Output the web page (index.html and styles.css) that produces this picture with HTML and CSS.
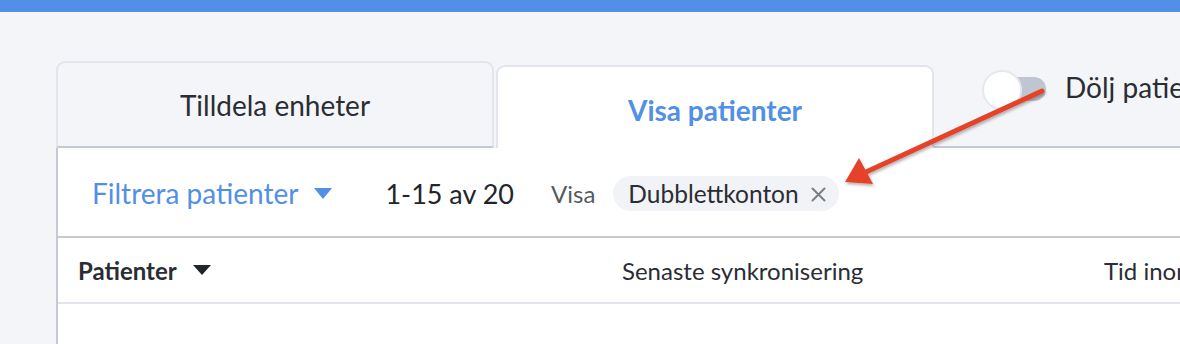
FILE: index.html
```html
<!DOCTYPE html>
<html lang="sv">
<head>
<meta charset="utf-8">
<link rel="stylesheet" href="styles.css">
</head>
<body>
<div class="topbar"></div>
<div class="main">
  <div class="tabs-row">
    <div class="tab tab-inactive">Tilldela enheter</div>
    <div class="tab tab-active">Visa patienter</div>
    <div class="tabs-filler">
      <div class="toggle">
        <span class="track"></span>
        <span class="knob"></span>
      </div>
      <span class="toggle-label">Dölj patienter</span>
    </div>
  </div>
  <div class="panel">
    <div class="filter-row">
      <span class="filter-btn">Filtrera patienter <span class="tri tri-blue"></span></span>
      <span class="count">1-15 av 20</span>
      <span class="visa">Visa</span>
      <span class="chip">Dubblettkonton
        <svg class="chip-x" width="15" height="15" viewBox="0 0 15 15"><path d="M1.5 1.5 L13.5 13.5 M13.5 1.5 L1.5 13.5" stroke="#7a7f87" stroke-width="2" stroke-linecap="round"/></svg>
      </span>
    </div>
    <div class="head-row">
      <div class="col col-patients">Patienter <span class="tri tri-dark"></span></div>
      <div class="col col-sync">Senaste synkronisering</div>
      <div class="col col-time">Tid inom mål</div>
    </div>
    <div class="body-row"></div>
  </div>
</div>
<svg class="arrow" width="1180" height="344" viewBox="0 0 1180 344">
  <defs>
    <filter id="sh" x="-20%" y="-20%" width="140%" height="140%">
      <feDropShadow dx="1" dy="2" stdDeviation="1.5" flood-color="#000" flood-opacity="0.3"/>
    </filter>
  </defs>
  <g filter="url(#sh)">
    <line x1="1042" y1="91" x2="866" y2="172" stroke="#e5432c" stroke-width="5" stroke-linecap="round"/>
    <polygon points="845,182 859,158 873,184" fill="#e5432c"/>
  </g>
</svg>
</body>
</html>
```

FILE: styles.css
```css
* { box-sizing: border-box; }
html, body { margin: 0; padding: 0; }
body {
  width: 1180px;
  height: 344px;
  overflow: hidden;
  background: #f4f5f9;
  font-family: Lato, "Open Sans", sans-serif;
  color: #2a2d33;
  position: relative;
}
.topbar {
  height: 12px;
  background: #538fe7;
}
.main {
  padding: 49px 0 0 56px;
}
.tabs-row {
  display: flex;
  align-items: flex-end;
  height: 87px;
}
.tab {
  width: 438px;
  flex: none;
  display: flex;
  align-items: center;
  justify-content: center;
  font-size: 28px;
  border: 2px solid #e2e5eb;
  border-radius: 9px 9px 0 0;
}
.tab-inactive {
  height: 87px;
  background: #f4f5f9;
  border-bottom: 2px solid #c4c9d3;
  padding-top: 0;
}
.tab-active {
  height: 83px;
  margin-left: 2px;
  background: #fff;
  border-bottom: none;
  color: #528fe6;
  font-weight: 700;
  padding-top: 4px;
}
.tabs-filler {
  flex: 1;
  align-self: stretch;
  border-bottom: 2px solid #c4c9d3;
  display: flex;
  align-items: flex-start;
  padding: 9px 0 0 48px;
  white-space: nowrap;
  overflow: hidden;
}
.toggle {
  position: relative;
  width: 64px;
  height: 40px;
  flex: none;
}
.track {
  position: absolute;
  left: 16px;
  top: 7px;
  width: 48px;
  height: 24px;
  border-radius: 12px;
  background: #c0c6d0;
}
.knob {
  position: absolute;
  left: 0;
  top: 0;
  width: 40px;
  height: 40px;
  border-radius: 50%;
  background: #fff;
  border: 2px solid #e6e8ee;
}
.toggle-label {
  font-size: 28px;
  margin-left: 19px;
  margin-top: 0;
}
.panel {
  background: #fff;
  border-left: 2px solid #c4c9d3;
  height: 200px;
}
.filter-row {
  height: 90px;
  display: flex;
  align-items: center;
  padding-left: 34px;
  border-bottom: 2px solid #c4c9d3;
  padding-top: 2px;
  white-space: nowrap;
}
.filter-btn {
  color: #528fe6;
  font-size: 28px;
  display: flex;
  align-items: center;
}
.tri {
  display: inline-block;
  width: 0;
  height: 0;
  border-left: 9px solid transparent;
  border-right: 9px solid transparent;
}
.tri-blue {
  border-top: 11px solid #528fe6;
  margin-left: 16px;
}
.count {
  font-size: 27px;
  margin-left: 53px;
  color: #22252a;
}
.visa {
  font-size: 24px;
  color: #555a61;
  margin-left: 37px;
}
.chip {
  margin-left: 18px;
  background: #f1f3f7;
  border-radius: 18px;
  height: 35px;
  display: flex;
  align-items: center;
  padding: 0 13px 0 15px;
  font-size: 24.5px;
}
.chip-x {
  margin-left: 12px;
  margin-top: 2px;
  flex: none;
}
.head-row {
  height: 66px;
  display: flex;
  align-items: center;
  border-bottom: 2px solid #e1e4ea;
  font-size: 24px;
  white-space: nowrap;
  overflow: hidden;
}
.col { flex: none; }
.col-patients {
  width: 564px;
  padding-left: 20px;
  font-weight: 700;
  display: flex;
  align-items: center;
}
.tri-dark {
  border-top: 10px solid #22252a;
  margin-left: 16px;
}
.col-sync {
  width: 482px;
}
.arrow {
  position: absolute;
  left: 0;
  top: 0;
  pointer-events: none;
}
```
